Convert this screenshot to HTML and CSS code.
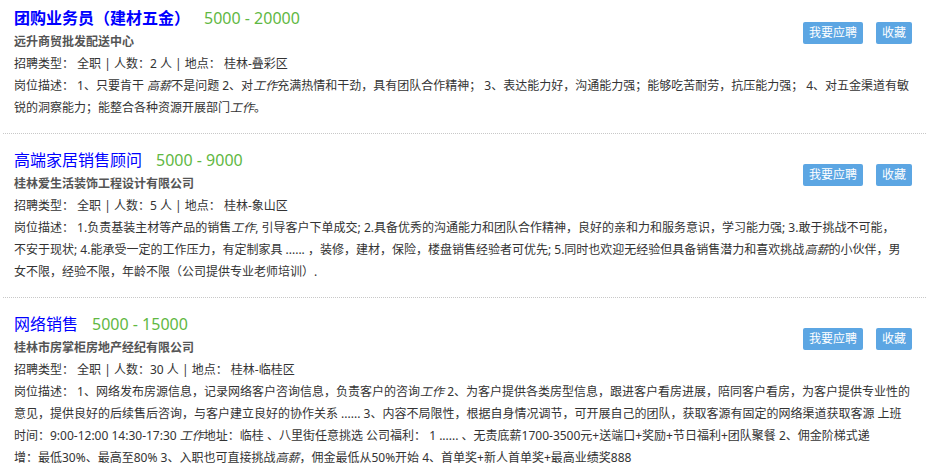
FILE: index.html
```html
<!DOCTYPE html>
<html lang="zh-CN">
<head>
<meta charset="UTF-8" />
<meta name="viewport" content="width=device-width, initial-scale=1" />
<title>职位列表</title>
<link rel="stylesheet" href="styles.css">
</head>
<body>
  <div class="page">
    <div class="list-top"><span class="update">2018-09-12</span></div>

    <ul class="job-list">
      <!-- 职位 1 -->
      <li class="job-item">
        <div class="job-head">
          <div class="job-info">
            <h3 class="job-title"><a href="#" class="bold">团购业务员（建材五金）</a><span class="salary">5000 - 20000</span></h3>
            <p class="company">远升商贸批发配送中心</p>
            <p class="meta">招聘类型： 全职 | 人数：2 人 | 地点： 桂林-叠彩区</p>
          </div>
          <div class="job-actions">
            <button type="button" class="btn">我要应聘</button>
            <button type="button" class="btn">收藏</button>
          </div>
        </div>
        <p class="desc">岗位描述： 1、只要肯干 <em>高薪</em>不是问题 2、对<em>工作</em>充满热情和干劲，具有团队合作精神； 3、表达能力好，沟通能力强；能够吃苦耐劳，抗压能力强； 4、对五金渠道有敏锐的洞察能力；能整合各种资源开展部门<em>工作</em>。</p>
      </li>

      <!-- 职位 2 -->
      <li class="job-item">
        <div class="job-head">
          <div class="job-info">
            <h3 class="job-title"><a href="#">高端家居销售顾问</a><span class="salary">5000 - 9000</span></h3>
            <p class="company">桂林爱生活装饰工程设计有限公司</p>
            <p class="meta">招聘类型： 全职 | 人数：5 人 | 地点： 桂林-象山区</p>
          </div>
          <div class="job-actions">
            <button type="button" class="btn">我要应聘</button>
            <button type="button" class="btn">收藏</button>
          </div>
        </div>
        <p class="desc">岗位描述： 1.负责基装主材等产品的销售<em>工作</em>, 引导客户下单成交; 2.具备优秀的沟通能力和团队合作精神，良好的亲和力和服务意识，学习能力强; 3.敢于挑战不可能，<br>不安于现状; 4.能承受一定的工作压力，有定制家具 ...... ，装修，建材，保险，楼盘销售经验者可优先; 5.同时也欢迎无经验但具备销售潜力和喜欢挑战<em>高薪</em>的小伙伴，男<br>女不限，经验不限，年龄不限（公司提供专业老师培训）.</p>
      </li>

      <!-- 职位 3 -->
      <li class="job-item">
        <div class="job-head">
          <div class="job-info">
            <h3 class="job-title"><a href="#">网络销售</a><span class="salary">5000 - 15000</span></h3>
            <p class="company">桂林市房掌柜房地产经纪有限公司</p>
            <p class="meta">招聘类型： 全职 | 人数：30 人 | 地点： 桂林-临桂区</p>
          </div>
          <div class="job-actions">
            <button type="button" class="btn">我要应聘</button>
            <button type="button" class="btn">收藏</button>
          </div>
        </div>
        <p class="desc">岗位描述： 1、网络发布房源信息，记录网络客户咨询信息，负责客户的咨询<em>工作</em> 2、为客户提供各类房型信息，跟进客户看房进展，陪同客户看房，为客户提供专业性的意见，提供良好的后续售后咨询，与客户建立良好的协作关系 ...... 3、内容不局限性，根据自身情况调节，可开展自己的团队，获取客源有固定的网络渠道获取客源 上班<br>时间：9:00-12:00 14:30-17:30 <em>工作</em>地址：临桂 、八里街任意挑选 公司福利： 1 ...... 、无责底薪1700-3500元+送端口+奖励+节日福利+团队聚餐 2、佣金阶梯式递<br>增：最低30%、最高至80% 3、入职也可直接挑战<em>高薪</em>，佣金最低从50%开始 4、首单奖+新人首单奖+最高业绩奖888</p>
      </li>
    </ul>
  </div>
</body>
</html>
```

FILE: styles.css
```css
:root {
  --azul: #0000ff;
  --verde: #5fb843;
  --botao: #5ca6e3;
  --texto: #333;
  --linha: #c8c8c8;
}
body {
  margin: 0;
  font-family: "Noto Sans", "Noto Sans CJK SC", sans-serif;
  color: var(--texto);
  background: #fff;
}
.page {
  margin-top: -11px;
}
.list-top {
  height: 15px;
  line-height: 14px;
  font-size: 12px;
  text-align: right;
  padding-right: 18px;
}
.update {
  color: #f60;
}
.job-list {
  list-style: none;
  margin: 0 3px;
  padding: 0;
}
.job-item {
  padding: 13px 14px 14px 11px;
  border-top: 1px dotted var(--linha);
}
.job-item:first-child {
  border-top: none;
  padding-top: 1px;
}
.job-head {
  display: flex;
  justify-content: space-between;
  align-items: flex-start;
}
.job-title {
  margin: 0;
  font-size: 16px;
  font-weight: normal;
  line-height: 26px;
}
.job-title a {
  color: var(--azul);
  text-decoration: none;
}
.job-title a.bold {
  font-weight: bold;
}
.salary {
  color: var(--verde);
  margin-left: 14px;
}
.company {
  margin: 0;
  font-size: 12px;
  font-weight: bold;
  line-height: 22px;
  color: #555;
}
.meta, .desc {
  margin: 0;
  font-size: 12px;
  line-height: 22px;
  color: var(--texto);
}
.desc em {
  font-style: italic;
}
.job-actions {
  display: flex;
  gap: 13px;
  margin-top: 17px;
}
.btn {
  height: 22px;
  padding: 0 6px;
  border: none;
  border-radius: 2px;
  background-color: var(--botao);
  color: #fff;
  font-family: inherit;
  font-size: 12px;
  line-height: 22px;
  cursor: pointer;
}
.btn:hover {
  background-color: #4a95d6;
}
```
